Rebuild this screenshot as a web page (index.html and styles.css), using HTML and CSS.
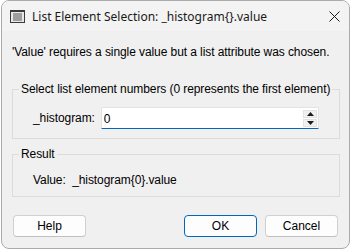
FILE: index.html
```html
<!DOCTYPE html>
<html lang="en">
<head>
<meta charset="utf-8">
<title>List Element Selection</title>
<link rel="stylesheet" href="styles.css">
</head>
<body>
<div class="window">
  <div class="titlebar">
    <svg class="app-icon" width="15" height="13" viewBox="0 0 15 13">
      <rect x="0.5" y="0.5" width="14" height="12" fill="#e8e8e8" stroke="#3a3a3a"/>
      <rect x="1" y="1" width="13" height="1" fill="#3a3a3a"/>
      <rect x="3" y="3.5" width="9" height="1" fill="#555"/>
      <rect x="3" y="5.5" width="9" height="1" fill="#555"/>
      <rect x="3" y="7.5" width="9" height="1" fill="#555"/>
      <rect x="3" y="9.5" width="9" height="1" fill="#555"/>
    </svg>
    <span class="title">List Element Selection: _histogram{}.value</span>
    <svg class="close" width="11" height="11" viewBox="0 0 11 11">
      <path d="M0.5 0.5 L10.5 10.5 M10.5 0.5 L0.5 10.5" stroke="#1b1b1b" stroke-width="1" fill="none"/>
    </svg>
  </div>
  <div class="content">
    <p class="message">'Value' requires a single value but a list attribute was chosen.</p>
    <fieldset class="group group-select">
      <legend>Select list element numbers (0 represents the first element)</legend>
      <div class="row">
        <label class="field-label" for="idx">_histogram:</label>
        <div class="spin-input">
          <input id="idx" class="spin-text" type="text" value="0">
          <div class="spin-buttons">
            <span class="spin-btn"><svg width="7" height="4" viewBox="0 0 7 4"><path d="M3.5 0 L7 4 L0 4 Z" fill="#1b1b1b"/></svg></span>
            <span class="spin-btn"><svg width="7" height="4" viewBox="0 0 7 4"><path d="M0 0 L7 0 L3.5 4 Z" fill="#1b1b1b"/></svg></span>
          </div>
        </div>
      </div>
    </fieldset>
    <fieldset class="group group-result">
      <legend>Result</legend>
      <div class="result">Value:&nbsp; _histogram{0}.value</div>
    </fieldset>
    <div class="buttons">
      <button class="btn">Help</button>
      <span class="spacer"></span>
      <button class="btn btn-default">OK</button>
      <button class="btn">Cancel</button>
    </div>
  </div>
</div>
</body>
</html>
```
FILE: styles.css
```css
* { box-sizing: border-box; }
html, body {
  margin: 0;
  padding: 0;
  background: #ffffff;
}
body {
  font-family: "Liberation Sans", Arial, sans-serif;
  font-size: 12px;
  line-height: 16px;
  letter-spacing: -0.08px;
  color: #000;
}
.window {
  margin-left: 1px;
  width: 349px;
  height: 249px;
  border: 1px solid #ababab;
  border-radius: 8px;
  overflow: hidden;
  background: #f0f0f0;
  display: flex;
  flex-direction: column;
}
.titlebar {
  height: 30px;
  background: #f3f3f3;
  display: flex;
  align-items: center;
  padding-left: 8px;
  padding-right: 8px;
}
.app-icon {
  display: block;
  margin-right: 7px;
}
.title {
  flex: 1;
  font-family: "Noto Sans", sans-serif;
  letter-spacing: 0;
  color: #1a1a1a;
  padding-top: 1px;
}
.close {
  display: block;
  margin-right: 1px;
  margin-top: 1px;
}
.content {
  flex: 1;
  display: flex;
  flex-direction: column;
  padding: 0 9px 0 10px;
}
.message {
  margin: 13px 0 0 0;
  white-space: nowrap;
}
.group {
  margin: 0;
  border: 1px solid #dcdcdc;
  padding: 0 0 0 6px;
  min-width: 0;
}
.group legend {
  padding: 0 2px;
  line-height: 16px;
  white-space: nowrap;
}
.group-select {
  margin-top: 21px;
  padding-top: 10px;
  padding-bottom: 9px;
  padding-right: 20px;
}
.row {
  display: flex;
  align-items: center;
  padding-left: 14px;
}
.field-label {
  margin-right: 6px;
}
.spin-input {
  flex: 1;
  height: 22px;
  display: flex;
  align-items: center;
  background: #ffffff;
  border: 1px solid #e3e3e3;
  border-bottom: 1px solid #0067c0;
  border-radius: 2px 2px 0 0;
  padding-right: 1px;
}
.spin-text {
  flex: 1;
  min-width: 0;
  border: 0;
  outline: 0;
  background: transparent;
  font: inherit;
  color: #000;
  padding: 2px 0 0 2px;
  margin: 0;
}
.spin-buttons {
  display: flex;
  flex-direction: column;
  gap: 1px;
}
.spin-btn {
  width: 14px;
  height: 8px;
  background: #f0f0f0;
  border: 1px solid #e2e2e2;
  display: flex;
  align-items: center;
  justify-content: center;
}
.spin-btn svg { display: block; }
.group-result {
  margin-top: 7px;
  padding-top: 10px;
  padding-bottom: 8px;
}
.result {
  padding-left: 14px;
}
.buttons {
  display: flex;
  margin-top: 18px;
  padding: 0 2px 0 1px;
  gap: 8px;
}
.spacer { flex: 1; }
.btn {
  width: 73px;
  height: 22px;
  font: inherit;
  color: #000;
  background: #fdfdfd;
  border: 1px solid #d0d0d0;
  border-bottom-color: #c0c0c0;
  border-radius: 4px;
  padding: 0;
  margin: 0;
}
.btn-default {
  border: 1px solid #0067c0;
}
```
